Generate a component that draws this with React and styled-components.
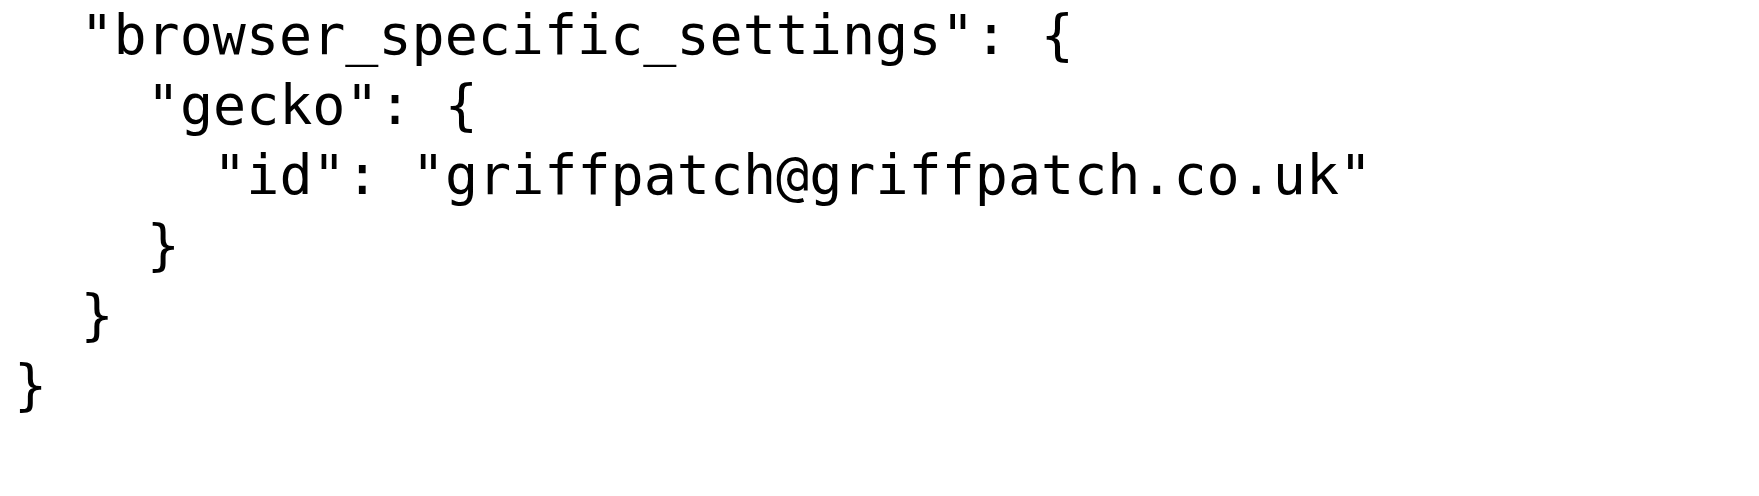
import React from 'react';
import styled, { createGlobalStyle } from 'styled-components';

const GlobalStyle = createGlobalStyle`
  html, body {
    margin: 0;
    padding: 0;
    background: #ffffff;
  }
`;

const CodeBlock = styled.pre`
  margin: 0;
  padding: 0 0 0 14px;
  font-family: "DejaVu Sans Mono", "Liberation Mono", monospace;
  font-size: 55px;
  line-height: 70px;
  color: #000000;
  background: #ffffff;
`;

const Line = styled.div`
  white-space: pre;
  padding-left: ${(p) => p.$level * 66.4}px;
`;

const lines = [
  { level: 1, text: '"browser_specific_settings": {' },
  { level: 2, text: '"gecko": {' },
  { level: 3, text: '"id": "griffpatch@griffpatch.co.uk"' },
  { level: 2, text: '}' },
  { level: 1, text: '}' },
  { level: 0, text: '}' },
];

const App = () => {
  return (
    <>
      <GlobalStyle />
      <CodeBlock>
        {lines.map((line, index) => (
          <Line key={index} $level={line.level}>{line.text}</Line>
        ))}
      </CodeBlock>
    </>
  );
};

export default App;
